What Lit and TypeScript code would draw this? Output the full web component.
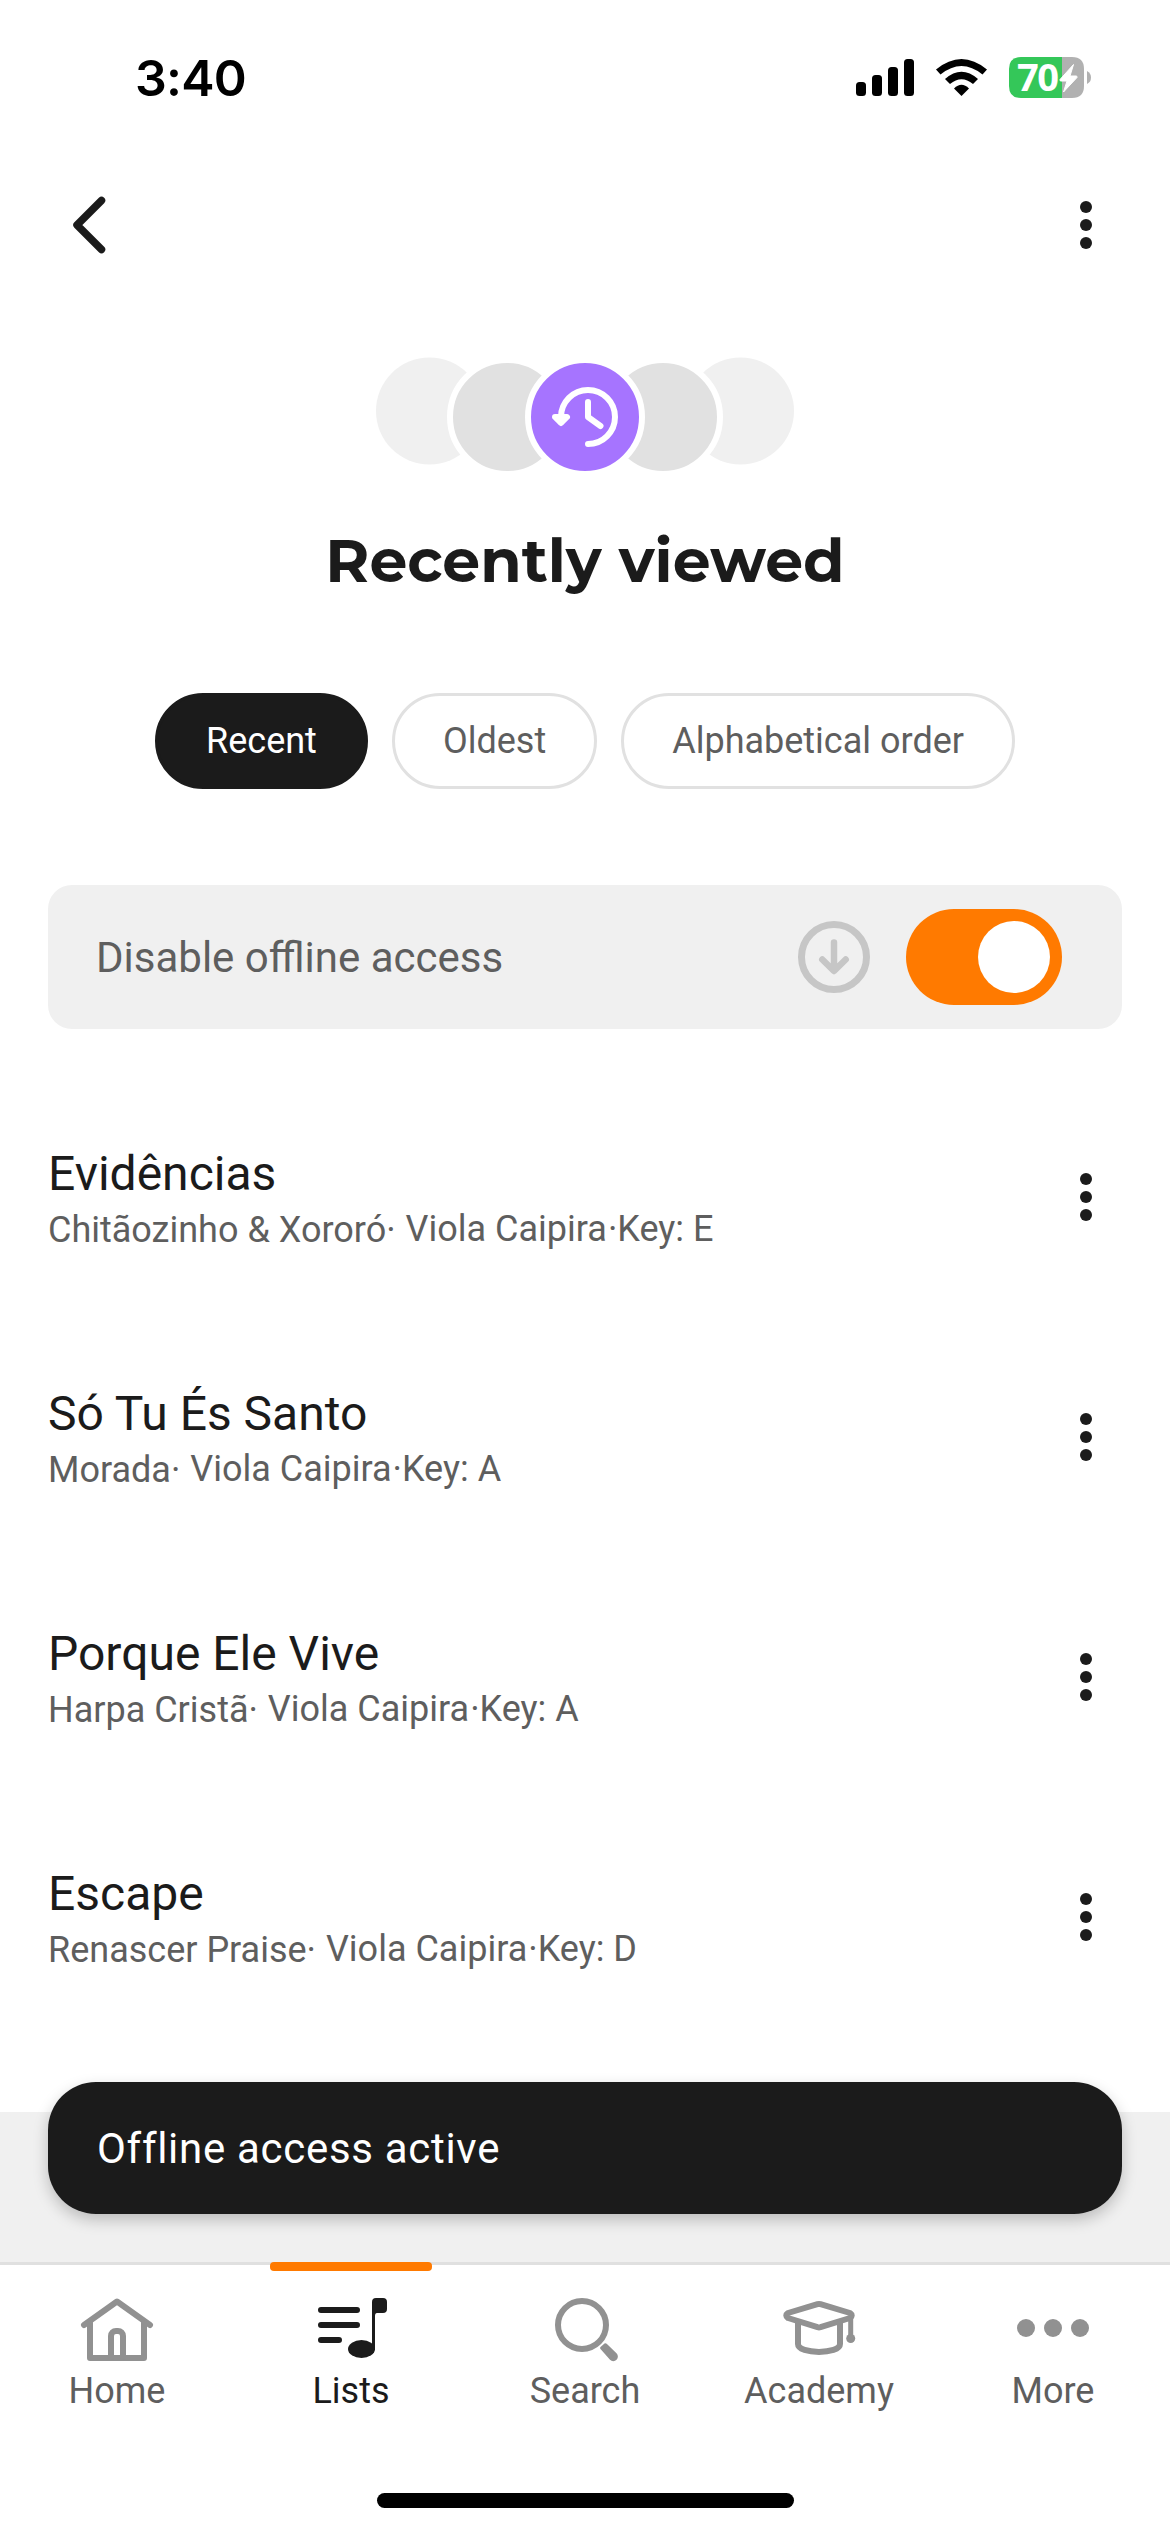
import { LitElement, html, svg, css } from "lit";
import { customElement } from "lit/decorators.js";

const songs = [
  { title: "Evidências", artist: "Chitãozinho & Xororó", key: "E" },
  { title: "Só Tu És Santo", artist: "Morada", key: "A" },
  { title: "Porque Ele Vive", artist: "Harpa Cristã", key: "A" },
  { title: "Escape", artist: "Renascer Praise", key: "D" },
];

const dots = html`<svg class="dots" width="12" height="48" viewBox="0 0 12 48" fill="#1b1b1b">
  <circle cx="6" cy="6" r="6"/><circle cx="6" cy="24" r="6"/><circle cx="6" cy="42" r="6"/>
</svg>`;

const tabs = [
  { label: "Home", icon: svg`<g fill="none" stroke="#919191" stroke-width="6" stroke-linecap="round" stroke-linejoin="round">
      <path d="M3 27L36 3.500 69 27"/><path d="M9 25v35h54V25"/><path d="M30 59V38a5 5 0 0 1 5-5h2a5 5 0 0 1 5 5v21"/></g>` },
  { label: "Lists", active: true, icon: svg`<g fill="none" stroke="#1b1b1b" stroke-width="6" stroke-linecap="round">
      <path d="M6 12h36M6 27h36M6 42h18"/></g>
      <ellipse cx="46.500" cy="51" rx="13.500" ry="9" fill="#1b1b1b"/>
      <path d="M57 52V4q0-4 4-4h7q4 0 4 4v7q0 4-4 4h-6q-2 0-2 3v34z" fill="#1b1b1b"/>` },
  { label: "Search", icon: svg`<circle cx="33" cy="27" r="24" fill="none" stroke="#919191" stroke-width="6"/>
      <path d="M51.500 49l4-3.500q1-.800 2.200.2L67.500 55.200a4.600 4.600 0 0 1-6.500 6.600L51.500 51q-1-1 0-2z" fill="#919191"/>` },
  { label: "Academy", icon: svg`<g fill="none" stroke="#919191" stroke-width="6" stroke-linecap="round" stroke-linejoin="round">
      <path d="M34.500 6.200L5 15q-3.500 2.500 0 5L34.500 29.200q1.500.4 3 0L67 20q3.500-2.500 0-5L37.500 6.200q-1.500-.4-3 0z"/>
      <path d="M15 25v21c0 10.500 42 10.500 42 0V25"/><path d="M67.700 20v19" stroke-width="5"/></g><circle cx="67.700" cy="40.500" r="4.500" fill="#919191"/>` },
  { label: "More", icon: svg`<g fill="#919191"><circle cx="9" cy="30" r="9"/><circle cx="36" cy="30" r="9"/><circle cx="63" cy="30" r="9"/></g>` },
];

@customElement("app-root")
class AppRoot extends LitElement {
  static styles = css`
    :host { display: block; font-family: Roboto, "Liberation Sans", sans-serif; color: #1b1b1b; }
    * { box-sizing: border-box; }
    svg { display: block; overflow: visible; flex: none; }
    .screen { height: 2532px; width: 1170px; background: #fff; display: flex; flex-direction: column; overflow: hidden; }
    .status { height: 156px; padding: 0 79px 0 135px; display: flex; align-items: center; justify-content: space-between; }
    .time { font: 600 50px/60px Inter, sans-serif; color: #000; letter-spacing: -0.8px; }
    .pct { font: 700 38px "Noto Sans", "Open Sans", sans-serif; fill: #fff; }
    .bar { height: 138px; display: flex; align-items: center; justify-content: space-between; padding: 0 78px 0 73px; }
    .stack { height: 184px; display: flex; justify-content: center; align-items: flex-end; padding-bottom: 7px; }
    .title { margin: 0; padding-top: 47px; height: 215px; text-align: center; font: 700 60px/72px Montserrat, Inter, sans-serif; }
    .chips { display: flex; justify-content: center; gap: 24px; height: 96px; }
    .chip { border: 3px solid #e1e1e1; border-radius: 48px; padding: 0 48px; font-size: 36px; line-height: 91px; color: #5e5e5e; }
    .chip.on { background: #1b1b1b; border-color: #1b1b1b; color: #fff; }
    .offline { margin: 96px 48px 0; height: 144px; border-radius: 24px; background: #f0f0f0; display: flex; align-items: center; padding: 0 60px 0 48px; }
    .offline-label { flex: 1; font-size: 42px; color: #5e5e5e; }
    .toggle { margin-left: 36px; width: 156px; height: 96px; border-radius: 48px; background: #ff7a00; display: flex; justify-content: flex-end; align-items: center; padding: 0 12px; }
    .knob { width: 72px; height: 72px; border-radius: 50%; background: #fff; }
    .list { padding: 48px 78px 0 48px; height: 1083px; }
    .song { height: 240px; display: flex; align-items: center; justify-content: space-between; }
    .name { font-size: 48px; line-height: 60px; padding-top: 3px; }
    .meta { display: flex; font-size: 36px; line-height: 48px; color: #5e5e5e; margin-top: 2px; white-space: pre; }
    .detail { margin: -1px 0 0 1px; }
    .footer { height: 150px; background: #f0f0f0; padding: 0 48px; }
    .toast { margin-top: -30px; height: 132px; border-radius: 48px; background: #1b1b1b; color: #fff; padding-left: 49px; font-size: 42px; line-height: 134px; letter-spacing: .7px; box-shadow: 0 6px 15px rgba(0,0,0,.22); }
    .nav { height: 231px; border-top: 3px solid #e0e0e0; display: grid; grid-template-columns: repeat(5, 1fr); }
    .tab { display: flex; flex-direction: column; align-items: center; color: #5e5e5e; font-size: 36px; line-height: 48px; }
    .tab.on { color: #1b1b1b; }
    .mark { width: 162px; height: 9px; margin: -3px 0 27px; border-radius: 4px; }
    .tab.on .mark { background: #ff7a00; }
    .label { margin-top: 3px; }
    .home { width: 417px; height: 15px; border-radius: 8px; background: #000; margin: 0 auto; flex: none; }
    .status, .bar, .stack, .title, .chips, .offline, .list, .footer, .nav { flex: none; }
  `;

  render() {
    return html`<div class="screen">
      <div class="status">
        <span class="time">3:40</span>
        <svg width="235" height="42" viewBox="856 57 235 42">
          <rect x="856" y="82" width="10" height="14" rx="3.500"/><rect x="872" y="75" width="10" height="21" rx="3.500"/>
          <rect x="888" y="67" width="10" height="29" rx="3.500"/><rect x="904" y="59" width="10" height="37" rx="3.500"/>
          <path d="M936 69.500Q961.500 48.500 987 69.500l-4.500 5Q961.500 57.500 940.500 74.500z"/>
          <path d="M945 79Q961.500 64.500 978 79l-5 5Q961.500 74.500 950 84z"/>
          <path d="M954 88.500Q961.500 81 969 88.500l-7.500 7.500z"/>
          <path d="M1021 57h41v41h-41q-12 0-12-12V69q0-12 12-12z" fill="#34c759"/>
          <path d="M1062 57h10q12 0 12 12v17q0 12-12 12h-10z" fill="#b1b1b1"/>
          <path d="M1087 71q4 2 4 6.500t-4 6.500z" fill="#b1b1b1"/>
          <text class="pct" x="1017" y="91" textLength="42">70</text>
          <path d="M1073.500 64.500L1060 79.500q-.500 1.500 1 1.500h6l-3.500 11L1077 77.500q.500-1.500-1-1.500h-6z" fill="#fff" stroke="#fff" stroke-linejoin="round"/>
        </svg>
      </div>
      <div class="bar">
        <svg width="32" height="56" viewBox="73 197 32 56"><path d="M101.500 200.500L77 225l24.500 24.500" fill="none" stroke="#1b1b1b" stroke-width="7.500" stroke-linecap="round" stroke-linejoin="round"/></svg>
        ${dots}
      </div>
      <div class="stack">
        <svg width="420" height="114" viewBox="375 357 420 114">
          <circle cx="429.500" cy="411" r="53.500" fill="#f0f0f0"/><circle cx="740.500" cy="411" r="53.500" fill="#f0f0f0"/>
          <circle cx="507" cy="417" r="57" fill="#e1e1e1" stroke="#fff" stroke-width="6"/>
          <circle cx="663" cy="417" r="57" fill="#e1e1e1" stroke="#fff" stroke-width="6"/>
          <circle cx="585" cy="417" r="57" fill="#a674ff" stroke="#fff" stroke-width="6"/>
          <g fill="none" stroke="#fff" stroke-width="6" stroke-linecap="round" stroke-linejoin="round">
            <path d="M588 444a27 27 0 1 0-27-27v5"/><path d="M588 402v15l12.500 9"/>
            <path d="M555 417l6 6 6-6z" fill="#fff"/>
          </g>
        </svg>
      </div>
      <h1 class="title">Recently viewed</h1>
      <div class="chips"><span class="chip on">Recent</span><span class="chip">Oldest</span><span class="chip">Alphabetical order</span></div>
      <div class="offline">
        <span class="offline-label">Disable offline access</span>
        <svg width="72" height="72" viewBox="0 0 72 72" fill="none" stroke="#c6c6c6" stroke-width="6.500" stroke-linecap="round" stroke-linejoin="round">
          <circle cx="36" cy="36" r="32.500" stroke-width="7"/><path d="M36 21.500v28M24.300 38.500L36 50l11.700-11.500"/>
        </svg>
        <div class="toggle"><div class="knob"></div></div>
      </div>
      <div class="list">
        ${songs.map((s) => html`<div class="song">
          <div><div class="name">${s.title}</div><div class="meta"><span>${s.artist}· </span><span class="detail">Viola Caipira</span><span class="detail">·Key: ${s.key}</span></div></div>
          ${dots}
        </div>`)}
      </div>
      <div class="footer"><div class="toast">Offline access active</div></div>
      <div class="nav">
        ${tabs.map((t) => html`<div class="tab ${t.active ? "on" : ""}">
          <div class="mark"></div><svg width="72" height="66" viewBox="0 0 72 66">${t.icon}</svg><span class="label">${t.label}</span>
        </div>`)}
      </div>
      <div class="home"></div>
    </div>`;
  }
}
